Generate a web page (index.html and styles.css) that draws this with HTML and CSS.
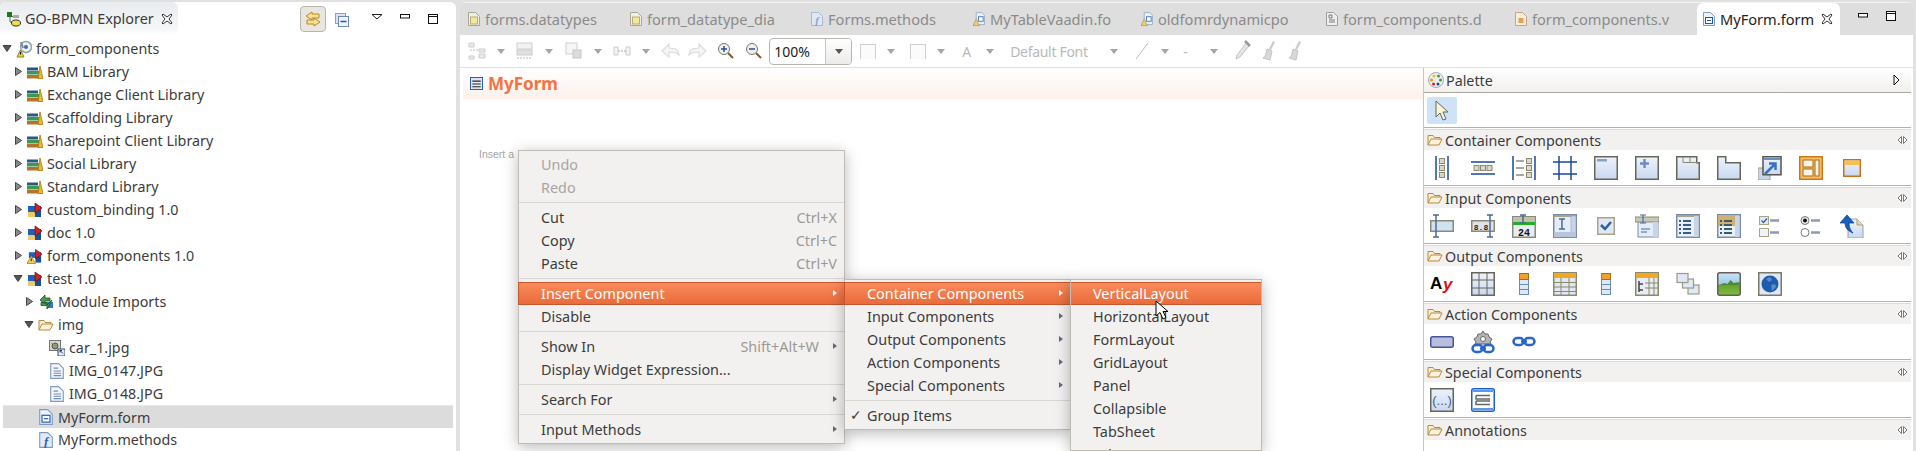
FILE: index.html
```html
<!DOCTYPE html>
<html lang="en">
<head>
<meta charset="utf-8">
<title>GO-BPMN Explorer - MyForm.form</title>
<link rel="stylesheet" href="styles.css">
</head>
<body>
<svg class="defs" aria-hidden="true">
  <defs>
    <linearGradient id="bf" x1="0" y1="0" x2="0" y2="1"><stop offset="0" stop-color="#eef3fb"/><stop offset="1" stop-color="#c8d8f0"/></linearGradient>
    <linearGradient id="of" x1="0" y1="0" x2="0" y2="1"><stop offset="0" stop-color="#f6c860"/><stop offset="1" stop-color="#fbeed0"/></linearGradient>
    <linearGradient id="gl" x1="0" y1="0" x2="0" y2="1"><stop offset="0" stop-color="#c8e4f8"/><stop offset=".55" stop-color="#9cc8e4"/><stop offset=".56" stop-color="#6aa030"/><stop offset="1" stop-color="#7cc040"/></linearGradient>

    <symbol id="arr-r" viewBox="0 0 9 11"><path d="M1.5 1.5l6 4-6 4z" fill="#8a8a8a" stroke="#444"/></symbol>
    <symbol id="arr-d" viewBox="0 0 11 9"><path d="M1 1.5h8l-4 6z" fill="#555" stroke="#444"/></symbol>
    <symbol id="i-tree" viewBox="0 0 16 16"><path d="M4 5v6h4M4 5.500h4" stroke="#666" fill="none"/><rect x="1" y="1" width="5" height="5" fill="#1a7a1a"/><rect x="7" y="4" width="6" height="3" fill="#aaa"/><ellipse cx="10" cy="12" rx="4.500" ry="3" fill="#f0e050" stroke="#333"/></symbol>
    <symbol id="i-close" viewBox="0 0 12 12"><path d="M2 1l4 3 4-3 1 1-3 4 3 4-1 1-4-3-4 3-1-1 3-4-3-4z" fill="#fff" stroke="#333"/></symbol>
    <symbol id="i-link" viewBox="0 0 18 18"><path d="M8 2L2 6l6 4V8h7V4H8zM10 8l6 4-6 4v-2H3v-4h7z" fill="#f5df9c" stroke="#b98d1a"/></symbol>
    <symbol id="i-collapse" viewBox="0 0 14 14"><rect x=".5" y=".5" width="10" height="10" fill="#d8e2f2" stroke="#8aa0c0"/><rect x="3.500" y="3.500" width="10" height="10" fill="#eef3fb" stroke="#6a88b0"/><path d="M5.500 8.500h6" stroke="#2b5a9a" stroke-width="1.500"/></symbol>
    <symbol id="i-min" viewBox="0 0 10 5"><rect x=".5" y=".5" width="9" height="3.500" fill="#fff" stroke="#111"/></symbol>
    <symbol id="i-max" viewBox="0 0 10 10"><rect x=".5" y=".5" width="9" height="9" fill="#fff" stroke="#111"/><path d="M0 2.500h10" stroke="#111"/></symbol>
    <symbol id="i-viewmenu" viewBox="0 0 12 6"><path d="M1 .5h10L6 5z" fill="#fff" stroke="#222"/></symbol>

    <symbol id="i-proj" viewBox="0 0 16 18"><circle cx="10" cy="7" r="5.500" fill="#f7f2d8" stroke="#88a4c8" stroke-width="1.500"/><circle cx="10" cy="7" r="2" fill="#2c70c0"/><path d="M5 2l2 6" stroke="#888" stroke-width="2"/><path d="M4.500 10L8 17H1z" fill="#f5d04a" stroke="#9a7a20"/><path d="M4.500 12v2.500" stroke="#111"/></symbol>
    <symbol id="i-lib" viewBox="0 0 16 14"><rect x="0" y="10" width="12" height="3.500" fill="#b8702a"/><rect x="0" y="6" width="12" height="3.500" fill="#3a9a50"/><rect x="0" y="2.500" width="11" height="3" fill="#2a5a80"/><path d="M11 13.500L13 1l3 12.500z" fill="#f0b830" stroke="#a07810" stroke-width=".8"/></symbol>
    <symbol id="i-mod" viewBox="0 0 16 16"><rect x="1" y="4" width="7" height="6" fill="#1e62b8"/><rect x="1" y="10" width="7" height="5" fill="#f2c860"/><rect x="8" y="4" width="6" height="11" fill="#1a4f98"/><path d="M8 1l7 5-7 5z" fill="#d81e1e" stroke="#601010" stroke-width=".7"/></symbol>
    <symbol id="i-modw" viewBox="0 0 17 16"><rect x="2" y="4" width="7" height="6" fill="#1e62b8"/><rect x="9" y="4" width="6" height="11" fill="#1a4f98"/><path d="M9 1l7 5-7 5z" fill="#d81e1e" stroke="#601010" stroke-width=".7"/><path d="M4.500 8L9 16H0z" fill="#f5d04a" stroke="#9a7a20" stroke-width=".8"/><path d="M4.500 10.500v3" stroke="#111"/></symbol>
    <symbol id="i-imp" viewBox="0 0 16 16"><rect x="9" y="8" width="6" height="6" fill="#3a78c0"/><path d="M2 6l5-5v3h5v3H7v3zM14 6l-5 5V8.500H3v3h6V15z" fill="#4a9a50" stroke="#1f4f22" stroke-width=".8"/></symbol>
    <symbol id="i-folder" viewBox="0 0 16 14"><path d="M1 12V2.500h5l1.500 2H13V6" fill="#fbeed0" stroke="#b88a3c"/><path d="M1 12l3-6h11l-3 6z" fill="#fdf3dc" stroke="#b88a3c"/></symbol>
    <symbol id="i-imglnk" viewBox="0 0 16 16"><rect x=".5" y=".5" width="11" height="10" fill="#d8d8c8" stroke="#777"/><circle cx="6" cy="6" r="3" fill="#88a070" stroke="#555"/><path d="M2 3l3 1" stroke="#c09020"/><rect x="9" y="9" width="7" height="7" fill="#e8eef8" stroke="#2a4a80"/><path d="M11 10.500l3 3M11 10.500h2M11 10.500v2" stroke="#1a3a70"/></symbol>
    <symbol id="i-doc" viewBox="0 0 12 14"><path d="M.5.500h7l4 4v9H.5z" fill="#f4f6fb" stroke="#7f9cc0"/><path d="M3 4.500h4M3 7h6.500M3 9h6.500M3 11h6.500" stroke="#6f8db8"/></symbol>
    <symbol id="i-form" viewBox="0 0 12 14"><path d="M.5.500h7l4 4v9H.5z" fill="#eef3fb" stroke="#7f9cc0"/><rect x="2.500" y="5.500" width="7" height="6" fill="#fff" stroke="#1f58b0"/><path d="M4 8.500h4" stroke="#1f58b0"/></symbol>
    <symbol id="i-meth" viewBox="0 0 12 14"><path d="M.5.500h7l4 4v9H.5z" fill="#e0ecfa" stroke="#7f9cc0"/><text x="6" y="12" class="ficon">f</text></symbol>
    <symbol id="i-tdoc" viewBox="0 0 12 14"><path d="M.5.500h7l4 4v9H.5z" fill="#f0f0e8" stroke="#a8a89a"/><rect x="2.500" y="5" width="7" height="7" fill="#f0e89a" stroke="#b8b070"/></symbol>
    <symbol id="i-tmeth" viewBox="0 0 12 14"><path d="M.5.500h7l4 4v9H.5z" fill="#dfe8f6" stroke="#aab8d0"/><text x="6" y="12" class="ficon ficon-dim">f</text></symbol>
    <symbol id="i-twarn" viewBox="0 0 13 15"><path d="M3.500.500h6l3 3v10h-9z" fill="#eaf0f8" stroke="#9ab0cc"/><rect x="6" y="5" width="5" height="5" fill="#fff" stroke="#4a78b8"/><path d="M3.500 8L7 14.500H0z" fill="#f2cf70" stroke="#aa8a40" stroke-width=".7"/></symbol>
    <symbol id="i-tpage" viewBox="0 0 12 14"><path d="M.5.500h7l4 4v9H.5z" fill="#f0f0ea" stroke="#a0a098"/><path d="M3 3h3v3H3zM3 8h6M3 10h6" stroke="#778" fill="none"/></symbol>
    <symbol id="i-torg" viewBox="0 0 12 14"><path d="M.5.500h7l4 4v9H.5z" fill="#f6ece0" stroke="#c0a888"/><rect x="3.500" y="6" width="5" height="5" fill="#e8a050"/></symbol>
    <symbol id="i-formb" viewBox="0 0 14 14"><rect x=".5" y=".5" width="13" height="13" fill="#fff" stroke="#1f58b0"/><rect x="2" y="2" width="10" height="10" fill="#e8eefa" stroke="#9ab0d8" stroke-width=".5"/><path d="M2.500 4.500h9M2.500 7.500h9M2.500 10.500h9" stroke="#222" stroke-width="1.200"/></symbol>

    <symbol id="t-1" viewBox="0 0 18 18"><path d="M1 1h5v4H1zM1 14h5v3H1zM11 7h6v3h-6zM11 12h6v4h-6z" fill="#eaeaea" stroke="#cdcdcd"/><path d="M2 8h9" stroke="#c0c0c0" stroke-dasharray="2 1"/></symbol>
    <symbol id="t-2" viewBox="0 0 18 18"><rect x="1" y="1" width="15" height="6" fill="#f2f2f2" stroke="#cfcfcf"/><rect x="1" y="8" width="15" height="5" fill="#e0e0e0" stroke="#cccccc"/><path d="M1 16h15" stroke="#bdbdbd" stroke-dasharray="2 1"/></symbol>
    <symbol id="t-3" viewBox="0 0 18 18"><rect x="1" y="1" width="11" height="11" fill="#f6f6f6" stroke="#d0d0d0"/><rect x="8" y="8" width="8" height="8" fill="#dcdcdc" stroke="#c8c8c8"/></symbol>
    <symbol id="t-4" viewBox="0 0 18 18"><path d="M1 5h4v8H1zM13 5h4v8h-4z" fill="#f4f4f4" stroke="#cccccc"/><path d="M5 9h8" stroke="#aaa" stroke-dasharray="2 1"/></symbol>
    <symbol id="t-back" viewBox="0 0 20 18"><path d="M1 9l7-7v4c7 0 10 2 10 7-3-3-5-3-10-3v5z" fill="#f6f6f6" stroke="#dcdcdc" stroke-width="1.200"/></symbol>
    <symbol id="t-fwd" viewBox="0 0 20 18"><path d="M19 9l-7-7v4C5 6 2 8 2 13c3-3 5-3 10-3v5z" fill="#f6f6f6" stroke="#dcdcdc" stroke-width="1.200"/></symbol>
    <symbol id="t-zi" viewBox="0 0 18 18"><path d="M11 11l5 5" stroke="#7a5a30" stroke-width="2"/><circle cx="7" cy="7" r="5.500" fill="#f0f0e8" stroke="#777"/><path d="M4 7h6M7 4v6" stroke="#2050a0" stroke-width="1.500"/></symbol>
    <symbol id="t-zo" viewBox="0 0 18 18"><path d="M11 11l5 5" stroke="#7a5a30" stroke-width="2"/><circle cx="7" cy="7" r="5.500" fill="#f0f0e8" stroke="#777"/><path d="M4 7h6" stroke="#2050a0" stroke-width="1.500"/></symbol>
    <symbol id="t-line" viewBox="0 0 18 20"><path d="M3 18L15 2" stroke="#bdbdbd"/></symbol>
    <symbol id="t-drop" viewBox="0 0 18 22"><path d="M13 3l3 3-9 11-4 2 1-4z" fill="#e4e4e4" stroke="#c4c4c4"/><path d="M12 1l5 5" stroke="#999" stroke-width="2.500"/></symbol>
    <symbol id="t-brush" viewBox="0 0 18 22"><path d="M14 1l2 1-4 8-2-1z" fill="#ccc"/><path d="M8 9l5 2-2 9-7-2c3-2 3-5 4-9z" fill="#d8d8d8" stroke="#c4c4c4"/></symbol>

    <symbol id="i-palette" viewBox="0 0 16 16"><circle cx="8" cy="8" r="7.500" fill="#eee" stroke="#aab"/><circle cx="6" cy="4" r="1.500" fill="#e6c020"/><circle cx="10.500" cy="4" r="1.500" fill="#40a040"/><circle cx="12.500" cy="8" r="1.500" fill="#30a030"/><circle cx="3.500" cy="8" r="1.500" fill="#f09020"/><circle cx="5.500" cy="12" r="1.500" fill="#e02020"/><circle cx="10" cy="12" r="1.500" fill="#2040c0"/></symbol>
    <symbol id="i-flyout" viewBox="0 0 8 12"><path d="M1 1l5 5-5 5z" fill="#fff" stroke="#111"/></symbol>
    <symbol id="i-sel" viewBox="0 0 14 22"><path d="M1 1v16l4-4 3 7 3-1-3-7h5z" fill="#fbf6cf" stroke="#666"/></symbol>
    <symbol id="i-dchev" viewBox="0 0 11 8"><path d="M4.500.5L1 4l3.500 3.500zM6.500.5L10 4 6.500 7.500z" fill="#fff" stroke="#777"/></symbol>
    <symbol id="i-cursor" viewBox="0 0 13 20"><path d="M1 1v15l4-3.500 3 6.500 3-1.500-3-6h5z" fill="#fff" stroke="#000"/></symbol>

    <symbol id="p-vl" viewBox="0 0 24 24"><path d="M6 0v24M18 0v24" stroke="#1848a0" stroke-width="1.500"/><g fill="#d8d8c8" stroke="#8a8a70"><rect x="9.500" y="2.500" width="5" height="5"/><rect x="9.500" y="9.500" width="5" height="5"/><rect x="9.500" y="16.500" width="5" height="5"/></g></symbol>
    <symbol id="p-hl" viewBox="0 0 24 24"><path d="M0 6h24M0 18h24" stroke="#1848a0" stroke-width="1.500"/><g fill="#d8d8c8" stroke="#8a8a70"><rect x="3" y="9.500" width="5" height="5"/><rect x="9.500" y="9.500" width="5" height="5"/><rect x="16" y="9.500" width="5" height="5"/></g></symbol>
    <symbol id="p-fl" viewBox="0 0 24 24"><path d="M1 0v24M23 0v24" stroke="#1848a0" stroke-width="1.500"/><path d="M4 5h8M4 12h8M4 19h8" stroke="#8a8a80" stroke-width="1.500"/><g fill="#d8d8c8" stroke="#8a8a70"><rect x="14.500" y="2.500" width="5" height="5"/><rect x="14.500" y="9.500" width="5" height="5"/><rect x="14.500" y="16.500" width="5" height="5"/></g></symbol>
    <symbol id="p-gl" viewBox="0 0 24 24"><path d="M6 0v24M18 0v24M0 6h24M0 18h24" stroke="#1848a0" stroke-width="1.500"/></symbol>
    <symbol id="p-panel" viewBox="0 0 24 24"><rect x=".75" y=".75" width="22.500" height="22.500" fill="url(#bf)" stroke="#66665a" stroke-width="1.500"/><rect x="3" y="3" width="10" height="2.500" fill="#8aa0c8"/></symbol>
    <symbol id="p-coll" viewBox="0 0 24 24"><rect x=".75" y=".75" width="22.500" height="22.500" fill="url(#bf)" stroke="#66665a" stroke-width="1.500"/><path d="M5 7.500h9M9.500 3v9" stroke="#6f8cc0" stroke-width="2.500"/></symbol>
    <symbol id="p-tabs" viewBox="0 0 24 24"><path d="M.75 23.250V.75h20v6h2.500v16.500z" fill="url(#bf)" stroke="#66665a" stroke-width="1.500"/><path d="M7 1v5.500h15M14 1v5.500" fill="none" stroke="#8a8a70"/></symbol>
    <symbol id="p-tab" viewBox="0 0 24 24"><path d="M.75 23.250V.75h8v6h14.500v16.500z" fill="url(#bf)" stroke="#66665a" stroke-width="1.500"/></symbol>
    <symbol id="p-ref" viewBox="0 0 24 24"><rect x="0" y="12" width="12" height="12" fill="#c8d4e8" stroke="#a0a090"/><rect x="5" y=".75" width="18" height="18" fill="url(#bf)" stroke="#55554a" stroke-width="1.500"/><rect x="6" y="2" width="16" height="2" fill="#6f8cc0"/><path d="M7 18L17 8M11 7.500h6.500V14" fill="none" stroke="#3a70c0" stroke-width="2.500"/></symbol>
    <symbol id="p-custom" viewBox="0 0 24 24"><rect x=".75" y=".75" width="22.500" height="22.500" fill="#f4c070" stroke="#d07810" stroke-width="1.500"/><g fill="#f8f4e8" stroke="#a86810"><rect x="4" y="4" width="10" height="7"/><rect x="4" y="13" width="10" height="7"/><rect x="16" y="4" width="4" height="16"/></g></symbol>
    <symbol id="p-win" viewBox="0 0 24 24"><rect x="3.750" y="3.750" width="16.500" height="16.500" fill="url(#bf)" stroke="#c8701a" stroke-width="1.500"/><rect x="4.500" y="4.500" width="15" height="4.500" fill="#f4c050"/></symbol>

    <symbol id="p-tf" viewBox="0 0 24 24"><rect x=".75" y="6.750" width="22.500" height="10.500" fill="#cfe2f0" stroke="#8a8a78" stroke-width="1.500"/><path d="M3 1h6M3 23h6M6 1v22" stroke="#4a6a9a" stroke-width="1.500"/></symbol>
    <symbol id="p-num" viewBox="0 0 24 24"><rect x=".75" y="6.750" width="22.500" height="10.500" fill="#dfe3e8" stroke="#8a8a78" stroke-width="1.500"/><text x="10" y="15.500" class="picon">8.8</text><path d="M16 1h6M16 23h6M19 1v22" stroke="#4a6a9a" stroke-width="1.500"/></symbol>
    <symbol id="p-date" viewBox="0 0 24 24"><rect x=".75" y="2.750" width="22.500" height="20.500" fill="#e8ecf4" stroke="#8a8a78" stroke-width="1.500"/><rect x="1" y="8" width="22" height="3" fill="#20b020"/><rect x="1" y="3" width="22" height="5" fill="#c0c0b0"/><path d="M8 1h6M8 9h6M11 1v8" stroke="#4a6a9a" stroke-width="1.500"/><text x="12" y="21.500" class="picon picon-lg">24</text></symbol>
    <symbol id="p-ta" viewBox="0 0 24 24"><rect x=".75" y=".75" width="22.500" height="22.500" fill="#e4ecf8" stroke="#7a8aa8" stroke-width="1.500"/><rect x="1" y="1" width="22" height="2" fill="#a8a488"/><rect x="18" y="2" width="5" height="21" fill="#c8d4e8" stroke="#8a98b8" stroke-width=".5"/><rect x="1" y="18" width="22" height="5" fill="#b8c6dc"/><path d="M6 5h6M6 15h6M9 5v10" stroke="#4a6a9a" stroke-width="1.500"/></symbol>
    <symbol id="p-chk" viewBox="0 0 24 24"><rect x="3.750" y="3.750" width="16.500" height="16.500" fill="#dfe8f4" stroke="#a8a488" stroke-width="1.500"/><path d="M7 11l4 4 6-7" fill="none" stroke="#2f5f9f" stroke-width="2.500"/></symbol>
    <symbol id="p-cmb" viewBox="0 0 24 24"><rect x="3" y="4" width="20" height="19" fill="#e4ecf8" stroke="#7a8aa8"/><rect x="0" y="3" width="24" height="5" fill="#c8c8b8" stroke="#8a8a78"/><rect x="18" y="8" width="5" height="15" fill="#c8d4e8"/><path d="M5 1h6M5 9h6M8 1v8M6 15h9M6 18h6" stroke="#4a6a9a" stroke-width="1.200"/></symbol>
    <symbol id="p-list" viewBox="0 0 24 24"><rect x=".75" y=".75" width="22.500" height="22.500" fill="#e8f0f8" stroke="#7a8aa8" stroke-width="1.500"/><rect x="1" y="1" width="22" height="2" fill="#a8a488"/><rect x="18" y="2" width="4.500" height="21" fill="#c8d4e8"/><path d="M3 7h2M7 7h8M3 11h2M7 11h8M3 15h2M7 15h8M3 19h2M7 19h8" stroke="#3a5a90" stroke-width="2"/></symbol>
    <symbol id="p-tree" viewBox="0 0 24 24"><rect x=".75" y=".75" width="22.500" height="22.500" fill="#e8f0f8" stroke="#7a8aa8" stroke-width="1.500"/><rect x="1" y="1" width="17" height="11" fill="#d0b070"/><rect x="18" y="2" width="4.500" height="21" fill="#c8d4e8"/><path d="M3 7h2M7 7h8M3 11h2M7 11h8M3 15h2M7 15h8M3 19h2M7 19h8" stroke="#3a5a70" stroke-width="2"/></symbol>
    <symbol id="p-chks" viewBox="0 0 24 24"><rect x="1.500" y="2.500" width="9" height="8" fill="#dfe8f4" stroke="#a8a488"/><path d="M3.500 6.500l2 2 3.500-4" fill="none" stroke="#2f5f9f" stroke-width="1.200"/><rect x="1.500" y="14.500" width="9" height="8" fill="#f0f4fa" stroke="#a8a488"/><path d="M12 6.500h9M12 18.500h9" stroke="#8a9ab8" stroke-width="2.500"/></symbol>
    <symbol id="p-radio" viewBox="0 0 24 24"><circle cx="6" cy="6.500" r="4" fill="#eee" stroke="#777"/><circle cx="6" cy="6.500" r="2" fill="#111"/><circle cx="6" cy="18.500" r="4" fill="#fff" stroke="#777"/><path d="M12 6.500h9M12 18.500h9" stroke="#8a9ab8" stroke-width="2.500"/></symbol>
    <symbol id="p-up" viewBox="0 0 24 24"><path d="M8 5h9l6 6v13H8z" fill="url(#bf)" stroke="#9aa0a8"/><path d="M17 5v6h6" fill="#e8d8a0" stroke="#b0a070"/><path d="M0 9l7-8 7 8H9c0 5 2 8 4 10-5-2-8-5-8-10z" fill="#1a5ec0" stroke="#103a80" stroke-width=".7"/></symbol>

    <symbol id="o-label" viewBox="0 0 24 24"><text x="0" y="17" class="ay">A</text><text x="13" y="18" class="ay ay-y">y</text></symbol>
    <symbol id="o-table" viewBox="0 0 24 24"><rect x=".75" y=".75" width="22.500" height="22.500" fill="url(#bf)" stroke="#66665a" stroke-width="1.500"/><path d="M8 1v22M16 1v22M1 8h22M1 16h22" stroke="#66665a"/></symbol>
    <symbol id="o-col" viewBox="0 0 24 24"><rect x="7.500" y="1.500" width="9" height="21" fill="#dfe8f4" stroke="#6a8ab8"/><rect x="8" y="2" width="8" height="5" fill="#f0a030"/><path d="M8 7.500h8M8 12.500h8M8 17.500h8" stroke="#6a8ab8"/><path d="M7.500 1.500h9v6h-9" fill="none" stroke="#a07010"/></symbol>
    <symbol id="o-grid" viewBox="0 0 24 24"><rect x=".75" y=".75" width="22.500" height="22.500" fill="#dfe8f4" stroke="#8a8a68" stroke-width="1.500"/><rect x="1" y="1" width="22" height="5" fill="#f0a828"/><path d="M1 10.500h22M1 15h22M1 19.500h22M8 6v17M16 6v17" stroke="#8a8a68"/></symbol>
    <symbol id="o-tt" viewBox="0 0 24 24"><rect x=".75" y=".75" width="22.500" height="22.500" fill="#e8ecf4" stroke="#8a8a68" stroke-width="1.500"/><rect x="1" y="1" width="22" height="5" fill="#f0a828"/><path d="M14 6v17M19 6v17M10 11h13M10 16h13" stroke="#8a8a68"/><path d="M4 9v11M4 12h4M4 18h4" stroke="#444" stroke-width="1.500" fill="none"/></symbol>
    <symbol id="o-stack" viewBox="0 0 24 24"><g fill="#dfe8f4" stroke="#9a9a88" stroke-width="1.200"><rect x="12" y="13" width="11" height="9"/><rect x="6.500" y="7" width="11" height="9"/><rect x="1" y="1.500" width="11" height="9"/></g></symbol>
    <symbol id="o-img" viewBox="0 0 24 24"><rect x=".75" y=".75" width="22.500" height="22.500" rx="2" fill="url(#gl)" stroke="#6a5a58" stroke-width="1.500"/><path d="M1.500 13l6-2 3 1 3-4 3 3 6-1v3h-21z" fill="#4a8a30"/></symbol>
    <symbol id="o-web" viewBox="0 0 24 24"><rect x=".75" y=".75" width="22.500" height="22.500" fill="#dfe8f4" stroke="#7a7a68" stroke-width="1.500"/><circle cx="12" cy="12" r="8.500" fill="#1f5cb0"/><path d="M8 7l4-2 2 3-3 2zM13 13l4-1 1 3-4 4z" fill="#5a8ac8"/></symbol>

    <symbol id="a-btn" viewBox="0 0 24 24"><rect x=".75" y="6.750" width="22.500" height="10.500" rx="2" fill="#b8bede" stroke="#44549c" stroke-width="1.500"/></symbol>
    <symbol id="a-cfg" viewBox="0 0 24 24"><path d="M12 1l2 3h3l1 3 3 2-2 3 1 2h-16l1-2-2-3 3-2 1-3h3z" fill="#b4b4b4" stroke="#666"/><circle cx="12" cy="9" r="2.500" fill="#fff" stroke="#666"/><g fill="none" stroke="#2a66c8" stroke-width="2.500"><rect x="1.500" y="15" width="10" height="7" rx="3.500"/><rect x="12.500" y="15" width="10" height="7" rx="3.500"/></g><path d="M9 18.500h6" stroke="#2a66c8" stroke-width="2.500"/></symbol>
    <symbol id="a-lnk" viewBox="0 0 24 24"><g fill="none" stroke="#2a66c8" stroke-width="2.500"><rect x="1.500" y="8" width="10" height="7" rx="3.500"/><rect x="12.500" y="8" width="10" height="7" rx="3.500"/></g><path d="M9 11.500h6" stroke="#2a66c8" stroke-width="2.500"/></symbol>
    <symbol id="s-expr" viewBox="0 0 24 24"><rect x=".75" y=".75" width="22.500" height="22.500" fill="url(#bf)" stroke="#66665a" stroke-width="1.500"/><text x="12" y="17" class="expr">(...)</text></symbol>
    <symbol id="s-form" viewBox="0 0 24 24"><rect x=".75" y=".75" width="22.500" height="22.500" rx="2" fill="#fff" stroke="#1a60c8" stroke-width="1.500"/><rect x="2" y="2" width="20" height="2" fill="#5a98e8"/><rect x="2" y="20" width="20" height="2" fill="#5a98e8"/><path d="M5 7.500h14M5 13h14M5 7.500v3.500h14M5 13v3.500h14" fill="none" stroke="#666" stroke-width="1.500"/></symbol>
  </defs>
</svg>

<div class="app">
  <aside class="explorer">
    <div class="view-head">
      <div class="view-tab">
        <svg class="ic16"><use href="#i-tree"/></svg>
        <span class="view-title">GO-BPMN Explorer</span>
        <svg class="ic-close"><use href="#i-close"/></svg>
      </div>
      <div class="view-tools">
        <span class="toggle"><svg class="ic18"><use href="#i-link"/></svg></span>
        <svg class="ic14 collapse"><use href="#i-collapse"/></svg>
        <svg class="ic-vm"><use href="#i-viewmenu"/></svg>
        <svg class="ic-min"><use href="#i-min"/></svg>
        <svg class="ic-max"><use href="#i-max"/></svg>
      </div>
    </div>
    <ul class="tree">
      <li class="row l0"><svg class="tw tw-d"><use href="#arr-d"/></svg><svg class="ti ti-proj"><use href="#i-proj"/></svg>form_components</li>
      <li class="row l1"><svg class="tw"><use href="#arr-r"/></svg><svg class="ti"><use href="#i-lib"/></svg>BAM Library</li>
      <li class="row l1"><svg class="tw"><use href="#arr-r"/></svg><svg class="ti"><use href="#i-lib"/></svg>Exchange Client Library</li>
      <li class="row l1"><svg class="tw"><use href="#arr-r"/></svg><svg class="ti"><use href="#i-lib"/></svg>Scaffolding Library</li>
      <li class="row l1"><svg class="tw"><use href="#arr-r"/></svg><svg class="ti"><use href="#i-lib"/></svg>Sharepoint Client Library</li>
      <li class="row l1"><svg class="tw"><use href="#arr-r"/></svg><svg class="ti"><use href="#i-lib"/></svg>Social Library</li>
      <li class="row l1"><svg class="tw"><use href="#arr-r"/></svg><svg class="ti"><use href="#i-lib"/></svg>Standard Library</li>
      <li class="row l1"><svg class="tw"><use href="#arr-r"/></svg><svg class="ti"><use href="#i-mod"/></svg>custom_binding 1.0</li>
      <li class="row l1"><svg class="tw"><use href="#arr-r"/></svg><svg class="ti"><use href="#i-mod"/></svg>doc 1.0</li>
      <li class="row l1"><svg class="tw"><use href="#arr-r"/></svg><svg class="ti"><use href="#i-modw"/></svg>form_components 1.0</li>
      <li class="row l1"><svg class="tw tw-d"><use href="#arr-d"/></svg><svg class="ti"><use href="#i-mod"/></svg>test 1.0</li>
      <li class="row l2"><svg class="tw"><use href="#arr-r"/></svg><svg class="ti"><use href="#i-imp"/></svg>Module Imports</li>
      <li class="row l2"><svg class="tw tw-d"><use href="#arr-d"/></svg><svg class="ti"><use href="#i-folder"/></svg>img</li>
      <li class="row l3"><span class="tw"></span><svg class="ti"><use href="#i-imglnk"/></svg>car_1.jpg</li>
      <li class="row l3"><span class="tw"></span><svg class="ti"><use href="#i-doc"/></svg>IMG_0147.JPG</li>
      <li class="row l3"><span class="tw"></span><svg class="ti"><use href="#i-doc"/></svg>IMG_0148.JPG</li>
      <li class="row l2 selected"><span class="tw"></span><svg class="ti"><use href="#i-form"/></svg>MyForm.form</li>
      <li class="row l2"><span class="tw"></span><svg class="ti"><use href="#i-meth"/></svg>MyForm.methods</li>
    </ul>
  </aside>

  <main class="editor">
    <div class="tabs">
      <div class="tab t1"><svg class="tab-ic"><use href="#i-tdoc"/></svg>forms.datatypes</div>
      <div class="tab t2"><svg class="tab-ic"><use href="#i-tdoc"/></svg>form_datatype_dia</div>
      <div class="tab t3"><svg class="tab-ic"><use href="#i-tmeth"/></svg>Forms.methods</div>
      <div class="tab t4"><svg class="tab-ic"><use href="#i-twarn"/></svg>MyTableVaadin.fo</div>
      <div class="tab t5"><svg class="tab-ic"><use href="#i-twarn"/></svg>oldfomrdynamicpo</div>
      <div class="tab t6"><svg class="tab-ic"><use href="#i-tpage"/></svg>form_components.d</div>
      <div class="tab t7"><svg class="tab-ic"><use href="#i-torg"/></svg>form_components.v</div>
      <div class="tab active"><svg class="tab-ic"><use href="#i-form"/></svg>MyForm.form<svg class="ic-close"><use href="#i-close"/></svg></div>
      <div class="tabs-tools">
        <svg class="ic-min"><use href="#i-min"/></svg>
        <svg class="ic-max"><use href="#i-max"/></svg>
      </div>
    </div>

    <div class="toolbar">
      <span class="tg"><svg class="ic18"><use href="#t-1"/></svg><i class="caret"></i></span>
      <span class="tg"><svg class="ic18"><use href="#t-2"/></svg><i class="caret"></i></span>
      <span class="tg"><svg class="ic18"><use href="#t-3"/></svg><i class="caret"></i></span>
      <span class="tg"><svg class="ic18"><use href="#t-4"/></svg><i class="caret"></i></span>
      <svg class="ic20"><use href="#t-back"/></svg>
      <svg class="ic20 g6"><use href="#t-fwd"/></svg>
      <svg class="ic18 g10"><use href="#t-zi"/></svg>
      <svg class="ic18 g10"><use href="#t-zo"/></svg>
      <span class="combo"><span class="combo-val">100%</span><span class="combo-btn"><i class="caret caret-dark"></i></span></span>
      <span class="tg2"><i class="swatch"></i><i class="caret"></i></span>
      <span class="tg2"><i class="swatch"></i><i class="caret"></i></span>
      <span class="tb-a">A</span><i class="caret c-a"></i>
      <span class="tb-font">Default Font</span><i class="caret c-font"></i>
      <svg class="ic-line"><use href="#t-line"/></svg><i class="caret c-line"></i>
      <span class="tb-dash">-</span><i class="caret c-dash"></i>
      <svg class="ic-tool g-drop"><use href="#t-drop"/></svg>
      <svg class="ic-tool g-br"><use href="#t-brush"/></svg>
      <svg class="ic-tool g-br"><use href="#t-brush"/></svg>
    </div>

    <div class="workspace">
      <section class="canvas">
        <header class="form-head"><svg class="ic-formb"><use href="#i-formb"/></svg><h1 class="form-title">MyForm</h1></header>
        <p class="hint">Insert a</p>
      </section>

      <aside class="palette">
        <div class="pal-head"><svg class="ic16 pal-ic"><use href="#i-palette"/></svg><span class="pal-title">Palette</span><svg class="ic-fly"><use href="#i-flyout"/></svg></div>
        <div class="pal-tool"><span class="sel-btn"><svg class="ic-sel"><use href="#i-sel"/></svg></span></div>

        <div class="drawer">
          <div class="drawer-head"><svg class="dr-ic"><use href="#i-folder"/></svg><span class="dr-title">Container Components</span><svg class="dr-ch"><use href="#i-dchev"/></svg></div>
          <div class="drawer-icons">
            <svg class="pi"><use href="#p-vl"/></svg><svg class="pi"><use href="#p-hl"/></svg><svg class="pi"><use href="#p-fl"/></svg><svg class="pi"><use href="#p-gl"/></svg><svg class="pi"><use href="#p-panel"/></svg><svg class="pi"><use href="#p-coll"/></svg><svg class="pi"><use href="#p-tabs"/></svg><svg class="pi"><use href="#p-tab"/></svg><svg class="pi"><use href="#p-ref"/></svg><svg class="pi"><use href="#p-custom"/></svg><svg class="pi"><use href="#p-win"/></svg>
          </div>
        </div>
        <div class="drawer">
          <div class="drawer-head"><svg class="dr-ic"><use href="#i-folder"/></svg><span class="dr-title">Input Components</span><svg class="dr-ch"><use href="#i-dchev"/></svg></div>
          <div class="drawer-icons">
            <svg class="pi"><use href="#p-tf"/></svg><svg class="pi"><use href="#p-num"/></svg><svg class="pi"><use href="#p-date"/></svg><svg class="pi"><use href="#p-ta"/></svg><svg class="pi"><use href="#p-chk"/></svg><svg class="pi"><use href="#p-cmb"/></svg><svg class="pi"><use href="#p-list"/></svg><svg class="pi"><use href="#p-tree"/></svg><svg class="pi"><use href="#p-chks"/></svg><svg class="pi"><use href="#p-radio"/></svg><svg class="pi"><use href="#p-up"/></svg>
          </div>
        </div>
        <div class="drawer">
          <div class="drawer-head"><svg class="dr-ic"><use href="#i-folder"/></svg><span class="dr-title">Output Components</span><svg class="dr-ch"><use href="#i-dchev"/></svg></div>
          <div class="drawer-icons">
            <svg class="pi"><use href="#o-label"/></svg><svg class="pi"><use href="#o-table"/></svg><svg class="pi"><use href="#o-col"/></svg><svg class="pi"><use href="#o-grid"/></svg><svg class="pi"><use href="#o-col"/></svg><svg class="pi"><use href="#o-tt"/></svg><svg class="pi"><use href="#o-stack"/></svg><svg class="pi"><use href="#o-img"/></svg><svg class="pi"><use href="#o-web"/></svg>
          </div>
        </div>
        <div class="drawer">
          <div class="drawer-head"><svg class="dr-ic"><use href="#i-folder"/></svg><span class="dr-title">Action Components</span><svg class="dr-ch"><use href="#i-dchev"/></svg></div>
          <div class="drawer-icons">
            <svg class="pi"><use href="#a-btn"/></svg><svg class="pi"><use href="#a-cfg"/></svg><svg class="pi"><use href="#a-lnk"/></svg>
          </div>
        </div>
        <div class="drawer">
          <div class="drawer-head"><svg class="dr-ic"><use href="#i-folder"/></svg><span class="dr-title">Special Components</span><svg class="dr-ch"><use href="#i-dchev"/></svg></div>
          <div class="drawer-icons">
            <svg class="pi"><use href="#s-expr"/></svg><svg class="pi"><use href="#s-form"/></svg>
          </div>
        </div>
        <div class="drawer">
          <div class="drawer-head"><svg class="dr-ic"><use href="#i-folder"/></svg><span class="dr-title">Annotations</span><svg class="dr-ch"><use href="#i-dchev"/></svg></div>
        </div>
      </aside>
    </div>
  </main>
</div>

<ul class="menu m1">
  <li class="mi off">Undo</li>
  <li class="mi off">Redo</li>
  <li class="sep"></li>
  <li class="mi">Cut<span class="sc">Ctrl+X</span></li>
  <li class="mi">Copy<span class="sc">Ctrl+C</span></li>
  <li class="mi">Paste<span class="sc">Ctrl+V</span></li>
  <li class="sep"></li>
  <li class="mi hot sub">Insert Component</li>
  <li class="mi">Disable</li>
  <li class="sep"></li>
  <li class="mi sub">Show In<span class="sc sc-sub">Shift+Alt+W</span></li>
  <li class="mi">Display Widget Expression...</li>
  <li class="sep"></li>
  <li class="mi sub">Search For</li>
  <li class="sep"></li>
  <li class="mi sub">Input Methods</li>
</ul>
<ul class="menu m2">
  <li class="mi hot sub">Container Components</li>
  <li class="mi sub">Input Components</li>
  <li class="mi sub">Output Components</li>
  <li class="mi sub">Action Components</li>
  <li class="mi sub">Special Components</li>
  <li class="sep"></li>
  <li class="mi checked">Group Items</li>
</ul>
<ul class="menu m3">
  <li class="mi hot">VerticalLayout</li>
  <li class="mi">HorizontalLayout</li>
  <li class="mi">FormLayout</li>
  <li class="mi">GridLayout</li>
  <li class="mi">Panel</li>
  <li class="mi">Collapsible</li>
  <li class="mi">TabSheet</li>
  <li class="mi">Tab</li>
</ul>
<svg class="pointer"><use href="#i-cursor"/></svg>
</body>
</html>
```
FILE: styles.css
```css
* { box-sizing: border-box; }
html, body { margin: 0; padding: 0; height: 451px; overflow: hidden; }
body {
  width: 1916px;
  position: relative;
  background: #e1e1e1;
  color: #3c3c3c;
  font: 14.3px/23px "Noto Sans", "Liberation Sans", sans-serif;
}
ul { list-style: none; margin: 0; padding: 0; }
h1, p { margin: 0; }
svg { display: block; flex: none; }
.defs { position: absolute; width: 0; height: 0; overflow: hidden; }

.ficon { font: italic 700 11px "Liberation Serif", serif; fill: #2a5fb0; text-anchor: middle; }
.ficon-dim { fill: #8aa4cc; }
.picon { font: 700 8px "Liberation Mono", monospace; fill: #222; text-anchor: middle; }
.picon-lg { font-size: 10px; fill: #111; }
.ay { font: 700 17px "Liberation Sans", sans-serif; fill: #000; }
.ay-y { font-style: italic; fill: #e01010; }
.expr { font: 13px "Liberation Sans", sans-serif; fill: #4a5a78; text-anchor: middle; }

.app { display: flex; height: 451px; padding-top: 2px; gap: 4px; padding-right: 3px; }
.explorer { width: 456px; flex: none; background: #fff; border-radius: 6px 6px 0 0; overflow: hidden; }
.editor { flex: 1; display: flex; flex-direction: column; background: #fff; border-radius: 6px 6px 0 0; overflow: hidden; }

/* explorer */
.view-head { display: flex; height: 33px; justify-content: space-between; }
.view-tab {
  width: 178px; display: flex; align-items: center; padding-left: 6px;
  background: linear-gradient(#e9ecef, #f4f6f8 80%, #fff);
  border-radius: 6px 6px 0 0;
}
.ic16 { width: 16px; height: 16px; }
.ic14 { width: 14px; height: 14px; }
.ic18 { width: 18px; height: 18px; }
.ic20 { width: 20px; height: 18px; }
.view-title { margin-left: 3px; font-size: 14.4px; white-space: nowrap; }
.ic-close { width: 12px; height: 12px; margin-left: 7px; }
.view-tools { display: flex; align-items: flex-start; padding-top: 4px; }
.toggle {
  width: 26px; height: 26px; display: flex; align-items: center; justify-content: center;
  background: #e9e6e0; border: 1px solid #b8b5ae; border-radius: 4px;
}
.collapse { margin: 7px 0 0 9px; }
.ic-vm { width: 12px; height: 6px; margin: 8px 0 0 22px; }
.ic-min { width: 10px; height: 5px; margin: 8px 0 0 17px; }
.ic-max { width: 10px; height: 10px; margin: 8px 18px 0 18px; }

.tree { padding-top: 2px; }
.row { display: flex; align-items: center; height: 23px; margin-left: 3px; white-space: nowrap; }
.l1 { padding-left: 11px; }
.l2 { padding-left: 22px; }
.l3 { padding-left: 33px; }
.tw { width: 9px; height: 11px; margin-right: 4px; flex: none; }
.tw-d { width: 11px; height: 9px; margin-left: -1px; margin-right: 3px; }
.ti { width: 16px; height: 16px; margin-right: 4px; }
.ti-proj { height: 18px; }
.selected { width: 450px; background: #dcdcdc; border-top: 1px solid #e8e8e8; }

/* tabs */
.tabs { position: relative; display: flex; height: 33px; background: #dedede; border-top: 1px solid #f4f4f4; flex: none; }
.tab { display: flex; align-items: center; color: #8b8b8b; font-size: 14.6px; white-space: nowrap; padding-left: 8px; }
.tab-ic { width: 12px; height: 14px; margin-right: 5px; }
.t1 { width: 162px; }
.t2 { width: 181px; }
.t3 { width: 152px; }
.t4 { width: 178px; padding-left: 18px; }
.t5 { width: 186px; }
.t6 { width: 188px; padding-left: 7px; }
.t7 { width: 190px; }
.active { width: 143px; padding-left: 6px; color: #222; background: #fff; border-radius: 6px 6px 0 0; }
.tabs-tools { display: flex; align-items: flex-start; }
.tabs-tools .ic-min { margin: 10px 0 0 18px; }
.tabs-tools .ic-max { margin: 8px 0 0 18px; }

/* toolbar */
.toolbar { display: flex; align-items: center; height: 33px; padding-left: 8px; border-bottom: 1px solid #e0e0e0; flex: none; color: #b9b9b9; }
.tg { display: flex; align-items: center; width: 48.3px; }
.tg .caret { margin-left: 11px; }
.caret { display: block; flex: none; width: 0; height: 0; border-left: 4px solid transparent; border-right: 4px solid transparent; border-top: 5px solid #a6a6a6; }
.caret-dark { border-top-color: #555; }
.g6 { margin-left: 6px; }
.g10 { margin-left: 10px; }
.combo { display: flex; width: 83px; height: 27px; margin-left: 6px; border: 1px solid #b8b5ae; border-radius: 4px; background: #fff; color: #222; }
.combo-val { width: 55px; padding-left: 4px; font-size: 14px; line-height: 25px; }
.combo-btn { flex: 1; display: flex; align-items: center; justify-content: center; border-left: 1px solid #c8c5be; background: linear-gradient(#fff, #ecebe8); border-radius: 0 3px 3px 0; }
.tg2 { display: flex; align-items: center; width: 50px; }
.combo + .tg2 { margin-left: 8px; }
.swatch { display: block; width: 16px; height: 15px; background: #fbfbfb; border: 1px solid #cfcfcf; border-bottom: none; }
.tg2 .caret { margin-left: 11px; }
.tb-a { margin-left: 2px; font-size: 14px; }
.c-a { margin-left: 15px; }
.tb-font { margin-left: 16px; font-size: 14px; width: 84px; white-space: nowrap; letter-spacing: -.3px; }
.c-font { margin-left: 16px; }
.ic-line { width: 18px; height: 20px; margin-left: 15px; }
.c-line { margin-left: 10px; }
.tb-dash { margin-left: 14px; }
.c-dash { margin-left: 22px; }
.ic-tool { width: 18px; height: 22px; }
.g-drop { margin-left: 15px; }
.g-br { margin-left: 8px; }

/* workspace */
.workspace { flex: 1; display: flex; min-height: 0; }
.canvas { width: 963px; flex: none; padding-left: 3px; }
.form-head { display: flex; align-items: center; height: 31px; padding-left: 7px; background: linear-gradient(#fff, #fdf0ea); }
.ic-formb { width: 13px; height: 13px; }
.form-title { margin-left: 5px; color: #f47340; font-size: 17px; line-height: 23px; font-weight: 700; }
.hint { margin: 48px 0 0 16px; color: #a5a5a5; font: 10.5px/14px "Liberation Sans", sans-serif; }

/* palette */
.palette { flex: 1; border-left: 1px solid #c8c6c0; padding-right: 2px; min-width: 0; }
.pal-head { display: flex; align-items: center; height: 25px; padding-left: 4px; background: linear-gradient(#fff, #f1f0ee); border-bottom: 1px solid #aaa8a0; }
.pal-ic { margin-right: 2px; }
.pal-title { font-size: 14.3px; flex: 1; }
.ic-fly { width: 8px; height: 12px; margin-right: 10px; }
.pal-tool { height: 34px; padding: 4px 0 0 3px; }
.sel-btn { display: flex; align-items: center; justify-content: center; width: 30px; height: 27px; background: #cee2f8; border-radius: 2px; }
.ic-sel { width: 14px; height: 22px; }
.drawer { border-top: 1px solid #b4b2aa; padding-top: 1px; height: 58px; }
.drawer-head { display: flex; align-items: center; height: 21px; border-top: 1px solid #dcdcd8; background: #f2f1f0; padding-left: 3px; }
.dr-ic { width: 16px; height: 14px; margin-right: 2px; }
.dr-title { flex: 1; font-size: 14.3px; white-space: nowrap; }
.dr-ch { width: 11px; height: 8px; margin-right: 3px; }
.drawer-icons { display: flex; gap: 17px; height: 35px; align-items: center; padding-left: 6px; }
.pi { width: 24px; height: 24px; }

/* popup menus, floating over the workbench */
.menu { position: absolute; background: #f2f1f0; border: 1px solid #bfbcb6; padding: 2px 0; box-shadow: 0 3px 14px rgba(0, 0, 0, .28); white-space: nowrap; }
.m1 { left: 518px; top: 150px; width: 327px; }
.m2 { left: 844px; top: 279px; width: 227px; }
.m3 { left: 1070px; top: 279px; width: 192px; height: 172px; overflow: hidden; }
.mi { position: relative; display: flex; justify-content: space-between; height: 23px; padding: 0 7px 0 22px; font-size: 14.4px; line-height: 23px; }
.off { color: #a8a5a0; }
.sc { color: #9b9996; }
.sc-sub { margin-right: 18px; }
.sub::after { content: ""; position: absolute; right: 7px; top: 8px; border-left: 4px solid #6a6a6a; border-top: 3.5px solid transparent; border-bottom: 3.5px solid transparent; }
.hot { margin: 0 -1px; padding-left: 23px; color: #fff; background: linear-gradient(#fb8c5c, #e86a3a); box-shadow: inset 0 0 0 1px #c8562c; }
.hot.sub::after { border-left-color: #fff; right: 8px; }
.checked::before { content: "\2713"; position: absolute; left: 5px; top: 0; font-size: 14px; color: #3c3c3c; font-family: "DejaVu Sans", sans-serif; }
.sep { height: 7px; padding-top: 3px; }
.sep::before { content: ""; display: block; height: 1px; background: #d8d6d2; }
.pointer { position: absolute; left: 1155px; top: 300px; width: 13px; height: 20px; }
```
